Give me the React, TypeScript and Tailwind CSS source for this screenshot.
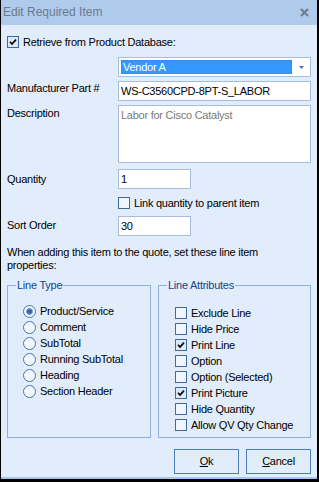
import React from "react";

function Check({ checked }: { checked?: boolean }) {
  return (
    <span
      className={
        "w-[12px] h-[12px] border border-[#3e6b9d] flex items-center justify-center shrink-0 " +
        (checked ? "bg-[#dbe8f8]" : "bg-[#f1f6fd]")
      }
    >
      {checked && (
        <svg width="8" height="8" viewBox="0 0 8 8">
          <path d="M1 3.8 L3 6 L7 1.6" stroke="#000" strokeWidth="1.7" fill="none" />
        </svg>
      )}
    </span>
  );
}

function Radio({ checked }: { checked?: boolean }) {
  return (
    <span className="w-[13px] h-[13px] rounded-full border border-[#4776a9] bg-[#f3f8fe] flex items-center justify-center shrink-0">
      {checked && <span className="w-[7px] h-[7px] rounded-full bg-[#3467a4] border border-[#7ea3cf]" />}
    </span>
  );
}

function Input({ value, w, h, gray }: { value: string; w: string; h: string; gray?: boolean }) {
  return (
    <div
      className={
        "bg-white border border-[#a7bdd9] px-[2px] pt-[3px] leading-[13px] " +
        w +
        " " +
        h +
        (gray ? " text-[#7a7a7a]" : " text-black")
      }
    >
      {value}
    </div>
  );
}

export default function App() {
  const radios = ["Product/Service", "Comment", "SubTotal", "Running SubTotal", "Heading", "Section Header"];
  const checks: [string, boolean][] = [
    ["Exclude Line", false],
    ["Hide Price", false],
    ["Print Line", true],
    ["Option", false],
    ["Option (Selected)", false],
    ["Print Picture", true],
    ["Hide Quantity", false],
    ["Allow QV Qty Change", false],
  ];
  return (
    <div className="w-[319px] h-[482px] bg-black pl-[1px] pr-[2px] pb-[3px] font-['Liberation_Sans',Arial,sans-serif] text-[11px] tracking-[-0.25px] leading-[13px] text-black">
      <div className="w-[316px] h-[479px] flex flex-col bg-[#e2edfc] border-b-2 border-[#a8c4e8]">
        <div className="h-[25px] bg-[#afcbeb] flex items-center justify-between pl-[2px] pr-[8px] shrink-0">
          <span className="text-[12px] tracking-[0px] text-[#6b7a8e]">Edit Required Item</span>
          <svg width="9" height="9" viewBox="0 0 9 9" className="mt-[-1px]">
            <path d="M1 1 L8 8 M8 1 L1 8" stroke="#6f7f95" strokeWidth="2.4" />
          </svg>
        </div>
        <div className="flex flex-col pl-[6px] pr-[6px]">
          <div className="mt-[11px] flex items-center gap-[4px] h-[12px]">
            <Check checked />
            <span>Retrieve from Product Database:</span>
          </div>
          <div className="mt-[9px] ml-[111px] w-[193px] h-[20px] bg-white border border-[#a7bdd9] p-[2px] flex items-center">
            <div className="flex-1 h-[14px] bg-[#3399ff] border border-dotted border-[#b8660f] text-white leading-[12px] pl-[1px]">
              Vendor A
            </div>
            <svg width="16" height="6" viewBox="0 0 16 6" className="shrink-0">
              <path d="M7 2 L12 2 L9.5 5 Z" fill="#5077a8" />
            </svg>
          </div>
          <div className="mt-[4px] flex">
            <div className="w-[111px] pt-[1px]">Manufacturer Part #</div>
            <Input value="WS-C3560CPD-8PT-S_LABOR" w="w-[193px]" h="h-[20px]" />
          </div>
          <div className="mt-[4px] flex">
            <div className="w-[111px] pt-[2px]">Description</div>
            <Input value="Labor for Cisco Catalyst" w="w-[193px]" h="h-[58px]" gray />
          </div>
          <div className="mt-[6px] flex">
            <div className="w-[111px] pt-[4px]">Quantity</div>
            <Input value="1" w="w-[73px]" h="h-[20px]" />
          </div>
          <div className="mt-[8px] ml-[111px] flex items-center gap-[4px] h-[12px]">
            <Check />
            <span>Link quantity to parent item</span>
          </div>
          <div className="mt-[7px] flex">
            <div className="w-[111px] pt-[3px]">Sort Order</div>
            <Input value="30" w="w-[73px]" h="h-[20px]" />
          </div>
          <div className="mt-[10px]">
            When adding this item to the quote, set these line item
            <br />
            properties:
          </div>
          <div className="mt-[13px] flex gap-[7px]">
            <div className="relative w-[144px] h-[153px] border border-[#8fb1de] pl-[15px] pt-[17px]">
              <span className="absolute left-[8px] top-[-7px] px-[1px] bg-[#e2edfc] text-[#15428b]">Line Type</span>
              {radios.map((r, i) => (
                <div key={r} className="h-[16px] flex items-center gap-[4px]">
                  <Radio checked={i === 0} />
                  <span>{r}</span>
                </div>
              ))}
            </div>
            <div className="relative w-[153px] h-[153px] border border-[#8fb1de] pl-[16px] pt-[19px]">
              <span className="absolute left-[8px] top-[-7px] px-[1px] bg-[#e2edfc] text-[#15428b]">Line Attributes</span>
              {checks.map(([c, on]) => (
                <div key={c} className="h-[16px] flex items-center gap-[4px]">
                  <Check checked={on} />
                  <span>{c}</span>
                </div>
              ))}
            </div>
          </div>
          <div className="mt-[11px] flex justify-end gap-[7px]">
            <div className="w-[65px] h-[25px] border border-[#4d7db6] flex items-center justify-center">
              <span>
                <span className="underline">O</span>k
              </span>
            </div>
            <div className="w-[65px] h-[25px] border border-[#4d7db6] flex items-center justify-center">
              <span>
                <span className="underline">C</span>ancel
              </span>
            </div>
          </div>
        </div>
      </div>
    </div>
  );
}
